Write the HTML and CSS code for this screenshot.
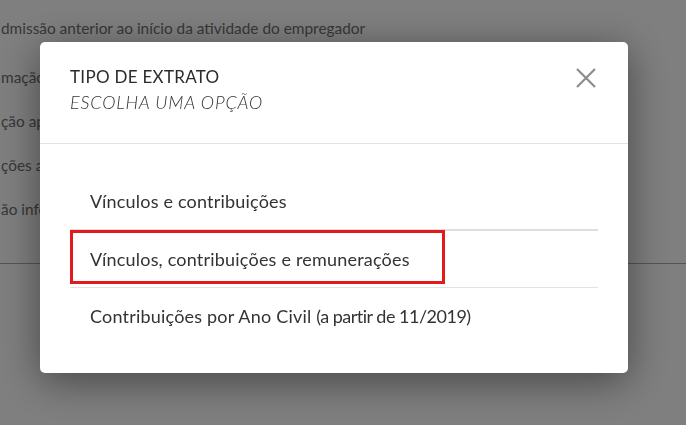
FILE: index.html
```html
<!DOCTYPE html>
<html lang="pt-BR">
<head>
    <meta charset="UTF-8">
    <meta name="viewport" content="width=device-width, initial-scale=1.0">
    <title>Tipo de extrato</title>
    <link rel="stylesheet" href="styles.css">
</head>
<body>
    <div class="page">
        <ul class="pending">
            <li>dmissão anterior ao início da atividade do empregador</li>
            <li>mação</li>
            <li>ção ap</li>
            <li>ções a</li>
            <li>ão info</li>
        </ul>
    </div>

    <div class="backdrop">
        <div class="modal">
            <div class="modal-header">
                <div>
                    <h4 class="modal-title">TIPO DE EXTRATO</h4>
                    <p class="modal-subtitle">ESCOLHA UMA OPÇÃO</p>
                </div>
                <button class="close" type="button" aria-label="Fechar">
                    <svg width="20" height="20" viewBox="0 0 20 20">
                        <path d="M1 1 L19 19 M19 1 L1 19" stroke="#8c8c8c" stroke-width="2.2" fill="none"/>
                    </svg>
                </button>
            </div>
            <div class="modal-body">
                <ul class="options">
                    <li class="option first"><span>Vínculos e contribuições</span></li>
                    <li class="option selected">
                        <span>Vínculos, contribuições e remunerações</span>
                        <span class="mark"></span>
                    </li>
                    <li class="option last"><span>Contribuições por Ano Civil <span class="period">(a partir de 11/2019)</span></span></li>
                </ul>
            </div>
        </div>
    </div>
</body>
</html>
```

FILE: styles.css
```css
html, body {
    margin: 0;
    padding: 0;
    height: 100%;
    overflow: hidden;
}

body {
    font-family: 'Lato', 'Open Sans', sans-serif;
    color: #333;
    background: #ffffff;
}

.page {
    border-bottom: 1px solid #aaa;
    padding-bottom: 32px;
}

.pending {
    list-style: none;
    margin: 0;
    padding: 17px 0 0 1px;
    color: #707070;
    font-size: 15.4px;
}

.pending li {
    line-height: 44px;
    white-space: nowrap;
}

.pending li:first-child {
    line-height: 22px;
    padding-bottom: 16px;
}

.backdrop {
    position: fixed;
    inset: 0;
    background: rgba(0, 0, 0, 0.5);
    padding: 42px 0 0 40px;
}

.modal {
    width: 588px;
    background: #ffffff;
    border-radius: 5px;
    box-shadow: 0 8px 40px rgba(0, 0, 0, 0.45);
}

.modal-header {
    display: flex;
    justify-content: space-between;
    align-items: flex-start;
    height: 102px;
    box-sizing: border-box;
    padding: 24px 32px 0 30px;
    border-bottom: 1px solid #e2e2e2;
}

.modal-title {
    margin: 0;
    font-size: 17px;
    font-weight: 400;
    letter-spacing: 0.3px;
    line-height: 22px;
    color: #2b2b2b;
}

.modal-subtitle {
    margin: 3px 0 0;
    font-size: 18px;
    font-style: italic;
    font-weight: 300;
    letter-spacing: 0.8px;
    line-height: 22px;
    color: #333;
}

.close {
    border: none;
    background: none;
    padding: 0;
    margin-top: 2px;
    width: 20px;
    height: 20px;
    cursor: pointer;
}

.modal-body {
    padding: 29px 30px;
}

.options {
    list-style: none;
    margin: 0;
    padding: 0;
}

.option {
    position: relative;
    display: flex;
    align-items: center;
    height: 56px;
    padding-left: 20px;
    font-size: 18px;
    letter-spacing: 0.2px;
    color: #333;
}

.option .period {
    letter-spacing: -0.5px;
}

.option.first {
    border-bottom: 2px solid #dedede;
}

.option.selected {
    border-bottom: 1px solid #e2e2e2;
}

.mark {
    position: absolute;
    left: 0;
    top: -1px;
    width: 375px;
    height: 54px;
    box-sizing: border-box;
    border: 3px solid #e3191c;
}
```
